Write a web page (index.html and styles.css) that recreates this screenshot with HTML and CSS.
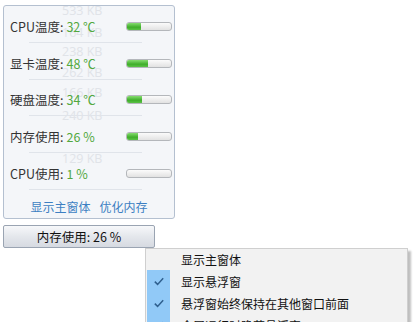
FILE: index.html
```html
<!DOCTYPE html>
<html>
<head>
<meta charset="utf-8">
<link rel="stylesheet" href="styles.css">
</head>
<body>
<div class="panel">
  <div class="ghost">
    <span style="top:-4px">533 KB</span>
    <span style="top:18px">164 KB</span>
    <span style="top:37px">238 KB</span>
    <span style="top:58px">262 KB</span>
    <span style="top:78px">166 KB</span>
    <span style="top:101px">240 KB</span>
    <span style="top:144px">129 KB</span>
  </div>
  <div class="row"><span class="label">CPU温度:</span><span class="val">32 ℃</span><span class="bar"><i style="width:32%"></i></span></div>
  <div class="row"><span class="label">显卡温度:</span><span class="val">48 ℃</span><span class="bar"><i style="width:48%"></i></span></div>
  <div class="row"><span class="label">硬盘温度:</span><span class="val">34 ℃</span><span class="bar"><i style="width:34%"></i></span></div>
  <div class="row"><span class="label">内存使用:</span><span class="val">26 %</span><span class="bar"><i style="width:24%"></i></span></div>
  <div class="row"><span class="label">CPU使用:</span><span class="val">1 %</span><span class="bar"><i style="width:0%"></i></span></div>
  <div class="links"><a>显示主窗体</a><a>优化内存</a></div>
</div>
<div class="btn">内存使用: 26 %</div>
<div class="menu">
  <div class="item first"><span class="chk"></span><span class="txt">显示主窗体</span></div>
  <div class="item on"><span class="chk"><svg width="10" height="9" viewBox="0 0 10 9"><polyline points="0.8,4.6 3.6,7.4 9.2,1.2" fill="none" stroke="#2f5f8e" stroke-width="1.5"/></svg></span><span class="txt">显示悬浮窗</span></div>
  <div class="item on"><span class="chk"><svg width="10" height="9" viewBox="0 0 10 9"><polyline points="0.8,4.6 3.6,7.4 9.2,1.2" fill="none" stroke="#2f5f8e" stroke-width="1.5"/></svg></span><span class="txt">悬浮窗始终保持在其他窗口前面</span></div>
  <div class="item on"><span class="chk"><svg width="10" height="9" viewBox="0 0 10 9"><polyline points="0.8,4.6 3.6,7.4 9.2,1.2" fill="none" stroke="#2f5f8e" stroke-width="1.5"/></svg></span><span class="txt">全屏运行时隐藏悬浮窗</span></div>
</div>
</body>
</html>
```
FILE: styles.css
```css
html, body { margin: 0; padding: 0; background: #fff; overflow: hidden; }
body {
  font-family: "Noto Sans CJK SC", "Noto Sans", sans-serif;
  font-size: 12px;
  color: #222;
  width: 415px;
  height: 322px;
  position: relative;
}
.panel {
  position: relative;
  margin: 5px 0 0 3px;
  width: 172px;
  height: 214px;
  border: 1px solid #b4c0d0;
  border-radius: 3px;
  background: #f4f6f9;
  box-sizing: border-box;
  padding: 2px 0 0 0;
}
.ghost { position: absolute; left: 58px; top: 0; }
.ghost span {
  position: absolute; left: 0; white-space: nowrap;
  font-family: "Open Sans", sans-serif; font-size: 12.5px; line-height: 18px; color: #e0e3e8;
}
.row {
  position: relative;
  display: flex;
  align-items: center;
  height: 36.8px;
  margin: 0 2px 0 6px;
}
.row::after {
  content: "";
  position: absolute;
  left: 19px; width: 113px;
  bottom: 2px;
  height: 1px;
  background: #e0e4ea;
}
.label { font-size: 12.5px; color: #333; }
.val { font-size: 12.5px; color: #52a83e; margin-left: 3px; flex: 1; }
.bar {
  width: 44px; height: 7px;
  border: 1px solid #b4b7bb;
  border-radius: 3px;
  background: linear-gradient(#fbfbfb, #e2e2e2);
  overflow: hidden;
  display: flex;
}
.bar i {
  display: block; height: 100%;
  background: linear-gradient(#86dc70, #3fae2a 60%, #5bc246);
}
.links {
  display: flex; justify-content: center; gap: 9px;
  padding-top: 6px;
  font-size: 12px;
}
.links a { color: #3d7fc2; }
.btn {
  margin: 6px 0 0 3px;
  width: 152px; height: 23px;
  box-sizing: border-box;
  border: 1px solid #9aa4b2;
  border-radius: 2px;
  background: linear-gradient(#f7f8fa, #e4e7ec 50%, #d6dae1);
  text-align: center;
  line-height: 21px;
  font-size: 12.5px;
  color: #111;
}
.menu {
  position: absolute;
  left: 145px; top: 248px;
  width: 263px; height: 74px;
  overflow: hidden;
  background: #f2f2f2;
  border: 1px solid #cfcfcf;
  border-bottom: none;
  box-shadow: 3px 3px 2px rgba(0,0,0,0.25);
  padding: 0 2px 0 1px;
  box-sizing: border-box;
}
.item { display: flex; align-items: center; height: 22px; }
.item.first { height: 21px; }
.chk {
  width: 23px; height: 22px;
  display: flex; align-items: center; justify-content: center;
}
.item.on .chk { background: #91c9f7; }
.txt { margin-left: 11px; font-size: 12px; color: #111; }
```
